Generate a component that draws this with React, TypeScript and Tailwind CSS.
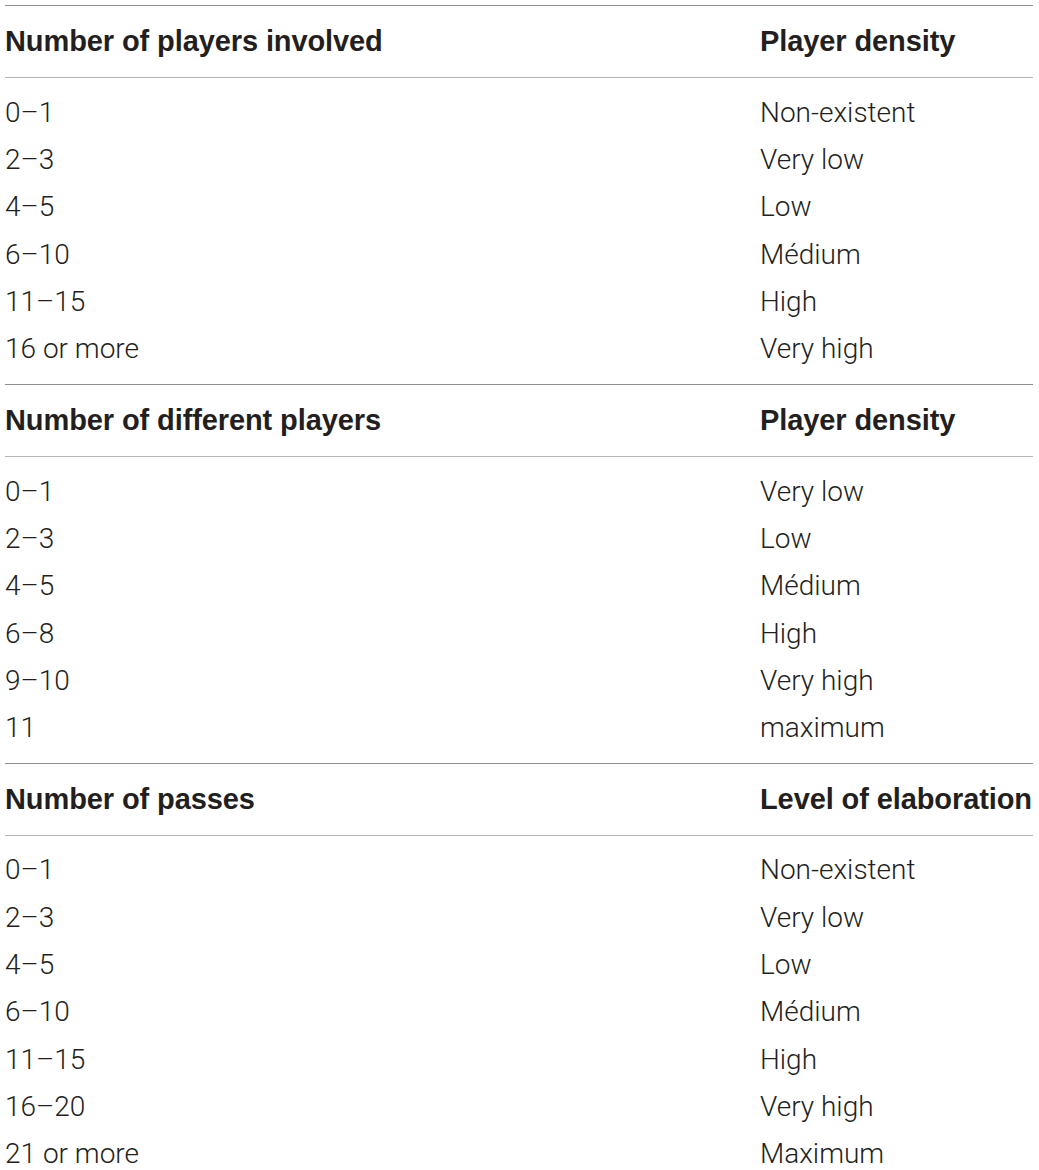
import React from "react";

type Section = { head: [string, string]; rows: [string, string][] };

const sections: Section[] = [
  {
    head: ["Number of players involved", "Player density"],
    rows: [
      ["0–1", "Non-existent"],
      ["2–3", "Very low"],
      ["4–5", "Low"],
      ["6–10", "Médium"],
      ["11–15", "High"],
      ["16 or more", "Very high"],
    ],
  },
  {
    head: ["Number of different players", "Player density"],
    rows: [
      ["0–1", "Very low"],
      ["2–3", "Low"],
      ["4–5", "Médium"],
      ["6–8", "High"],
      ["9–10", "Very high"],
      ["11", "maximum"],
    ],
  },
  {
    head: ["Number of passes", "Level of elaboration"],
    rows: [
      ["0–1", "Non-existent"],
      ["2–3", "Very low"],
      ["4–5", "Low"],
      ["6–10", "Médium"],
      ["11–15", "High"],
      ["16–20", "Very high"],
      ["21 or more", "Maximum"],
    ],
  },
];

export default function App() {
  return (
    <div className="w-[1039px] h-[1170px] overflow-hidden bg-white pt-[5px] pl-[5px]">
      <div className="w-[1028px] border-t border-[#8f8f8f]">
        {sections.map((s, i) => (
          <div key={i} className={i > 0 ? "border-t border-[#8f8f8f]" : ""}>
            <div className="grid grid-cols-[755px_1fr] h-[72px] pt-[1px] items-center border-b border-[#b5b5b5] font-['Liberation_Sans',Arial,sans-serif] font-bold text-[29px] text-[#231f20] tracking-[-0.1px]">
              <div>{s.head[0]}</div>
              <div className="whitespace-nowrap">{s.head[1]}</div>
            </div>
            <div className="pt-[11px] pb-[10.8px]">
              {s.rows.map((r, j) => (
                <div
                  key={j}
                  className="grid grid-cols-[755px_1fr] h-[47.35px] items-center font-['Roboto',sans-serif] font-light text-[28px] text-[#231f20]"
                >
                  <div>{r[0]}</div>
                  <div>{r[1]}</div>
                </div>
              ))}
            </div>
          </div>
        ))}
      </div>
    </div>
  );
}
